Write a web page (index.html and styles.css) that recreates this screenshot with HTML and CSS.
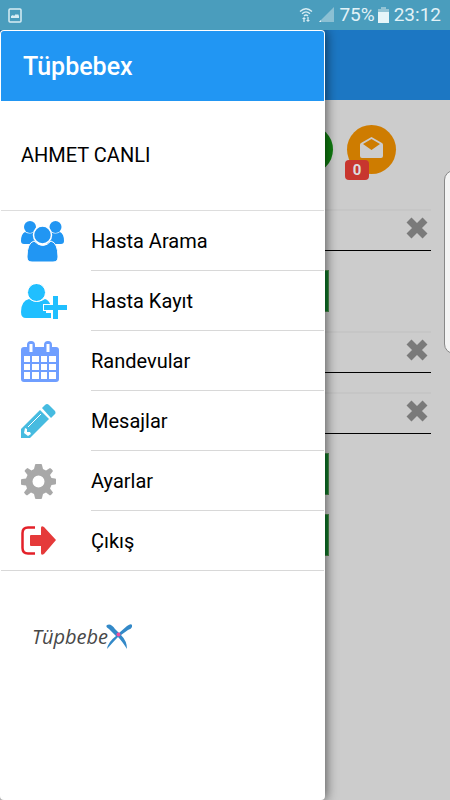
FILE: index.html
```html
<!DOCTYPE html>
<html lang="tr">
<head>
<meta charset="utf-8">
<meta name="viewport" content="width=device-width, initial-scale=1">
<title>Tüpbebex</title>
<link rel="stylesheet" href="styles.css">
</head>
<body>
<div class="status">
  <svg width="14" height="15" viewBox="0 0 14 15" aria-hidden="true"><rect x="1" y="1" width="12" height="13" rx="1" fill="none" stroke="#d8edf4" stroke-width="1.5"/><path d="M3 10V8l2-1 1 1 2-2 1 1 1-1 1 2v2z" fill="#d8edf4"/></svg>
  <div class="status-right">
    <svg width="14" height="16" viewBox="0 0 14 16" fill="none" stroke="#d8edf4" stroke-width="1.3" aria-hidden="true"><path d="M1 4.500Q7-1 13 4.500M3 6.800Q7 3 11 6.800M5 9Q7 7 9 9"/><path d="M5 15v-4M9 10v4" /><path d="M3 12l2-2 2 2zM7 13l2 2 2-2z" fill="#d8edf4" stroke="none"/></svg>
    <svg width="16" height="16" viewBox="0 0 16 16" aria-hidden="true"><path d="M16 0v15H1z" fill="#8bc0d3"/><path d="M3 13v2H1z" fill="#e2f2f7"/></svg>
    <span>75%</span>
    <svg class="battery" width="11" height="16" viewBox="0 0 11 16" aria-hidden="true"><path d="M3 0h5v2h3v3H0V2h3z" fill="#93c4d5"/><path d="M0 5h11v11H0z" fill="#e6f5f9"/></svg>
    <span>23:12</span>
  </div>
</div>

<div class="screen">
  <main class="page">
    <header class="page-bar"></header>
    <div class="shortcuts">
      <button class="round round-green" aria-label="Randevular"></button>
      <button class="round round-orange" aria-label="Mesajlar">
        <svg width="23" height="21" viewBox="0 0 23 21" aria-hidden="true"><path fill-rule="evenodd" d="M11.500 0L22 6q1 .6 1 2v11q0 2-2 2H2q-2 0-2-2V8q0-1.400 1-2zM11.500 2L3 7l8.500 6L20 7z" fill="#ccc"/></svg>
        <span class="count">0</span>
      </button>
    </div>
    <form class="form">
      <div class="field"><input type="text" aria-label="Ad"><button type="reset" class="clear" aria-label="Temizle"><svg width="24" height="24" viewBox="0 0 24 24"><path d="M4 4l16 16m0-16L4 20"/></svg></button></div>
      <button type="button" class="action" aria-label="Ara"></button>
      <div class="field"><input type="text" aria-label="Soyad"><button type="reset" class="clear" aria-label="Temizle"><svg width="24" height="24" viewBox="0 0 24 24"><path d="M4 4l16 16m0-16L4 20"/></svg></button></div>
      <div class="field"><input type="text" aria-label="Tarih"><button type="reset" class="clear" aria-label="Temizle"><svg width="24" height="24" viewBox="0 0 24 24"><path d="M4 4l16 16m0-16L4 20"/></svg></button></div>
      <button type="button" class="action" aria-label="Listele"></button>
      <button type="button" class="action" aria-label="Kaydet"></button>
    </form>
  </main>
  <div class="edge-handle"></div>

  <aside class="drawer">
    <h1 class="drawer-title">Tüpbebex</h1>
    <p class="user">AHMET CANLI</p>
    <nav class="menu">
      <a href="#" class="item">
        <svg width="43" height="41" viewBox="0 0 43 41" fill="#2196f3" aria-hidden="true"><circle cx="9" cy="6" r="6"/><circle cx="34.500" cy="6" r="6"/><path d="M4 11q5 3 9 0 1 11 6 12H3q-3 0-3-3 0-7 4-9zM39 11q-5 3-9 0-1 11-6 12h16q3 0 3-3 0-7-4-9z"/><path d="M13 20q9 9 17 0 7 2 7 16 0 5-5 5H11q-5 0-5-5 0-14 7-16z" stroke="#fff"/><circle cx="21.500" cy="14" r="9" stroke="#fff" stroke-width="1.500"/></svg>
        <span class="label">Hasta Arama</span>
      </a>
      <a href="#" class="item">
        <svg width="46" height="35" viewBox="0 0 46 35" fill="#20bfff" aria-hidden="true"><path d="M8 15q8 6 16 0 4 1 6 7h-5v7h5v5H5q-5 0-5-6 0-11 8-13z"/><circle cx="15.500" cy="8.500" r="9" stroke="#fff"/><path d="M32 12h5v9h9v5h-9v9h-5v-9h-9v-5h9z" stroke="#fff" stroke-width="2" paint-order="stroke"/></svg>
        <span class="label">Hasta Kayıt</span>
      </a>
      <a href="#" class="item">
        <svg width="38" height="41" viewBox="0 0 38 41" aria-hidden="true"><path d="M3 6h3V4q0-4 4-4t4 4v2h9V4q0-4 4-4t4 4v2h4q3 0 3 3v29q0 3-3 3H3q-3 0-3-3V9q0-3 3-3z" fill="#6f9eff"/><path d="M8.500 3h3v8h-3zM25.500 3h3v8h-3zM3 15h6v6H3zM11 15h7v6h-7zM20 15h6v6h-6zM28 15h7v6h-7zM3 23h6v6H3zM11 23h7v6h-7zM20 23h6v6h-6zM28 23h7v6h-7zM3 31h6v7H3zM11 31h7v7h-7zM20 31h6v7h-6zM28 31h7v7h-7z" fill="#fff"/></svg>
        <span class="label">Randevular</span>
      </a>
      <a href="#" class="item">
        <svg width="35" height="35" viewBox="0 0 35 35" fill="#46bbe0" aria-hidden="true"><path d="M19 6l9 9L9 34H0v-9z"/><path d="M21 4l3-3q2-2 4 0l6 6q1 2 0 3l-4 4z"/><path d="M4 24l2 1v3h3l1 2-3 2-4-3z" fill="#fff"/><path d="M7 23L20 10" stroke="#fff"/></svg>
        <span class="label">Mesajlar</span>
      </a>
      <a href="#" class="item">
        <svg width="35" height="35" viewBox="0 0 35 35" aria-hidden="true"><path fill-rule="evenodd" d="M14 1q0-1 1-1h5q1 0 1 1l1 4 3 1.500 4-2.500q2 1 3 3l-3 4 1.500 3 3.500.5q1 0 1 1v4q0 1-1 1l-3.500.5-1.500 3.500 3 4q-1 2-3 3l-4-3-3 1.500-1 4q0 1-1 1h-5q-1 0-1-1l-1-4-3-1.500-4 3q-2-1-3-3l3-4L5 21.500 1 21q-1 0-1-1v-4q0-1 1-1l4-.5L6.500 11l-3-4q1-2 3-3l4 2.500L13 5zM17.500 11.500a6 6 0 1 0 0 12 6 6 0 0 0 0-12z" fill="#a8a8a8"/></svg>
        <span class="label">Ayarlar</span>
      </a>
      <a href="#" class="item">
        <svg width="35" height="29" viewBox="0 0 35 29" aria-hidden="true"><path d="M14 1.500H7Q1.500 1.500 1.500 7v15q0 5.500 5.500 5.500h7" fill="none" stroke="#e32129" stroke-width="2.500"/><path d="M10 9h10V2q0-3 3-1l12 13-12 14q-3 2-3-1v-7H10q-1 0-1-1v-9q0-1 1-1z" fill="#e53a3a"/></svg>
        <span class="label">Çıkış</span>
      </a>
    </nav>
    <div class="logo">
      <span>Tüpbebe</span>
      <svg width="26" height="26" viewBox="0 0 26 26" aria-hidden="true"><path d="M1 1q4-2 8 4l4 4 8-7q4-3 5-1 1 3-4 5l-7 5q6 6 6 14-5-8-9-12Q8 17 1 25q1-7 9-13L3 5Q-1 3 1 1z" fill="#3389c8"/><circle cx="12.500" cy="10.500" r="2" fill="#f04da0"/></svg>
    </div>
  </aside>
</div>
</body>
</html>
```
FILE: styles.css
```css
* { box-sizing: border-box; }

html, body { height: 100%; }

body {
  margin: 0;
  display: flex;
  flex-direction: column;
  background: #ccc;
  color: #000;
  font-family: Roboto, "Noto Sans", sans-serif;
  font-size: 20px;
}

button { border: 0; padding: 0; font: inherit; }

.status {
  height: 30px;
  flex: none;
  display: flex;
  align-items: center;
  justify-content: space-between;
  padding: 0 9px 0 8px;
  background: #4a9dbd;
  color: #e2f2f7;
}

.status-right { display: flex; align-items: center; gap: 5px; font-size: 19px; }
.status-right span { line-height: 32px; }
.status-right .battery { margin-left: -2px; }

.screen {
  position: relative;
  flex: 1;
  overflow: hidden;
}

.page-bar { height: 70px; background: #1c77c3; }

.shortcuts {
  display: flex;
  justify-content: flex-end;
  gap: 14px;
  padding: 25px 54px 0 0;
}

.round {
  position: relative;
  display: grid;
  place-items: center;
  width: 49px;
  height: 49px;
  border-radius: 50%;
}
.round svg { margin-bottom: 4px; }
.round-green { background: #107c10; }
.round-orange { background: #ce7c00; }

.count {
  position: absolute;
  left: -2px;
  bottom: -6px;
  width: 24px;
  height: 20px;
  border-radius: 4px;
  background: #c8362e;
  color: #ddd;
  font-size: 15px;
  font-weight: 700;
  line-height: 20px;
}

.form {
  display: flex;
  flex-direction: column;
  gap: 19px;
  padding: 35px 19px 0;
}

.field {
  display: flex;
  align-items: center;
  height: 42px;
  border-top: 2px solid #c6c6c6;
  border-bottom: 1px solid #000;
}
.field input {
  flex: 1;
  min-width: 0;
  height: 36px;
  border: 0;
  background: transparent;
  font: inherit;
}
.clear { width: 24px; height: 24px; margin: 0 2px 6px 0; background: none; }
.clear svg { display: block; }
.clear path { stroke: #7a7a7a; stroke-width: 7; }

.action {
  align-self: center;
  width: 208px;
  height: 42px;
  background: #107a2a;
  border: 1px solid #4d8b4d;
}

.edge-handle {
  position: absolute;
  top: 140px;
  right: -14px;
  width: 20px;
  height: 184px;
  border: 1px solid #888;
  border-radius: 10px;
  background: #f4f4f4;
}

.drawer {
  position: absolute;
  inset: 0 auto 0 0;
  width: 325px;
  max-width: 85%;
  padding: 1px 1px 0;
  border-radius: 4px;
  background: #fff;
  box-shadow: 1px 0 12px rgba(0, 0, 0, .6);
}

.drawer-title {
  margin: 0;
  padding: 2px 22px 0;
  border-radius: 3px 3px 0 0;
  background: #2196f3;
  color: #fff;
  font-size: 25px;
  font-weight: 500;
  line-height: 68px;
}

.user {
  margin: 0;
  padding: 0 20px;
  border-bottom: 1px solid #ddd;
  line-height: 109px;
}

.item {
  display: grid;
  grid-template-columns: 70px 1fr;
  align-items: center;
  padding-left: 20px;
  color: inherit;
  text-decoration: none;
}
.label {
  height: 60px;
  border-bottom: 1px solid #d8d8d8;
  line-height: 60px;
}
.item:last-child { border-bottom: 1px solid #d8d8d8; }
.item:last-child .label { height: 59px; border-bottom: 0; }

.logo {
  display: flex;
  align-items: center;
  padding: 50px 31px 0;
  color: #484848;
  font-family: "Open Sans", sans-serif;
  font-style: italic;
  line-height: 32px;
}
.logo svg { margin-left: -2px; }
```
